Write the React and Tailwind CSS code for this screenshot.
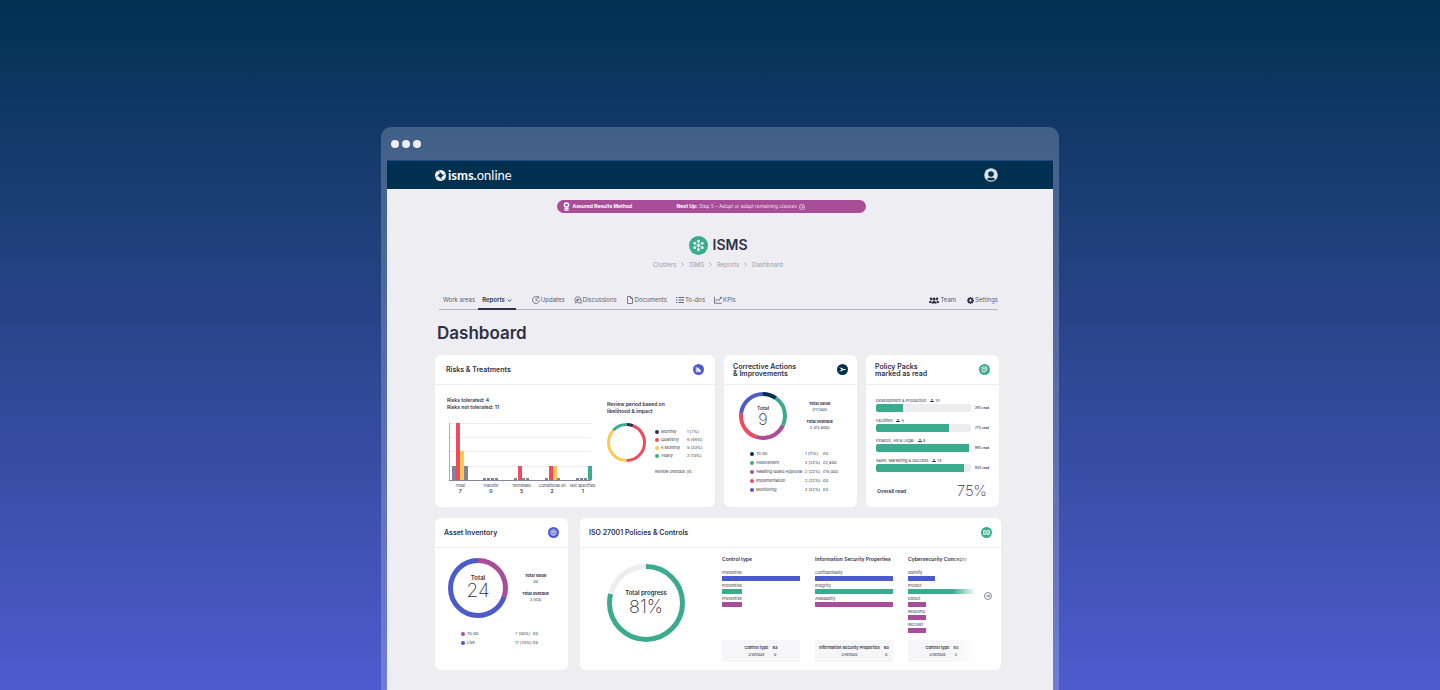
import { useState } from "react";
import clsx from "clsx";

const NAVY = "#00304f";
const INK = "#2f3147";
const RED = "#ee4b5e";
const YELLOW = "#ffc850";
const GREEN = "#3aab8e";
const PURPLE = "#a84d98";
const BLUE = "#4c5bcb";
const GREY = "#81839a";

const crumbs = ["Clusters", "ISMS", "Reports", "Dashboard"];

const riskGroups = [
  { label: "Treat", total: 7, x: 3, bars: [[14, GREY], [57, RED], [29, YELLOW], [14, GREY]] },
  { label: "Transfer", total: 0, x: 34, bars: [[2, GREY], [2, GREY], [2, GREY], [2, GREY]] },
  { label: "Terminate", total: 5, x: 65, bars: [[2, GREY], [14, RED], [2, GREY], [2, GREY]] },
  { label: "Conditional on", total: 2, x: 96, bars: [[2, GREY], [14, RED], [14, YELLOW], [2, GREY]] },
  { label: "Not specified", total: 1, x: 127, bars: [[2, GREY], [2, GREY], [2, GREY], [14, GREEN]] },
];

const reviewPeriods = [
  { label: "Monthly", value: "1 (7%)", dot: "bg-[#2f3147]" },
  { label: "Quarterly", value: "6 (46%)", dot: "bg-[#ee4b5e]" },
  { label: "6 Monthly", value: "5 (33%)", dot: "bg-[#ffc850]" },
  { label: "Yearly", value: "2 (13%)", dot: "bg-[#3aab8e]" },
];

const actions = [
  { label: "To-do", value: "1 (11%)", cost: "£0", dot: "bg-[#00304f]" },
  { label: "Assessment", value: "2 (22%)", cost: "£2,800", dot: "bg-[#3aab8e]" },
  { label: "Awaiting Board Approval", value: "2 (22%)", cost: "£15,000", dot: "bg-[#a84d98]" },
  { label: "Implementation", value: "2 (22%)", cost: "£0", dot: "bg-[#ee4b5e]" },
  { label: "Monitoring", value: "2 (22%)", cost: "£0", dot: "bg-[#4c5bcb]" },
];

const packs = [
  { label: "Development & Production", people: 14, read: 28 },
  { label: "Facilities", people: 6, read: 77 },
  { label: "Finance, HR & Legal", people: 9, read: 98 },
  { label: "Sales, Marketing & Success", people: 14, read: 93 },
];

const assets = [
  { label: "To-do", value: "7 (30%)", cost: "£0", dot: "bg-[#a84d98]" },
  { label: "Live", value: "17 (70%)", cost: "£0", dot: "bg-[#4c5bcb]" },
];

const controls = [
  {
    title: "Control type",
    footer: "Control type",
    bars: [
      { label: "Preventive", width: 100, color: "bg-[#4c5bcb]" },
      { label: "Preventive", width: 26, color: "bg-[#3aab8e]" },
      { label: "Preventive", width: 26, color: "bg-[#a84d98]" },
    ],
  },
  {
    title: "Information Security Properties",
    footer: "Information Security Properties",
    bars: [
      { label: "Confidentiality", width: 100, color: "bg-[#4c5bcb]" },
      { label: "Integrity", width: 100, color: "bg-[#3aab8e]" },
      { label: "Availability", width: 100, color: "bg-[#a84d98]" },
    ],
  },
  {
    title: "Cybersecurity Concepts",
    footer: "Control type",
    bars: [
      { label: "Identify", width: 39, color: "bg-[#4c5bcb]" },
      { label: "Protect", width: 100, color: "bg-[#3aab8e]" },
      { label: "Detect", width: 27, color: "bg-[#a84d98]" },
      { label: "Respond", width: 27, color: "bg-[#a84d98]" },
      { label: "Recover", width: 27, color: "bg-[#a84d98]" },
    ],
  },
];

/* ---------- Icons ---------- */

function LogoMark() {
  return (
    <svg viewBox="0 0 22 22" className="w-[11px] h-[11px]" aria-hidden="true">
      <circle cx="11" cy="11" r="11" fill="#fff" />
      <path d="M11 5.5 L14 8 L16.5 11 L14 14 L11 16.5 L8 14 L5.5 11 L8 8 Z" fill={NAVY} />
      <path d="M11 6 L6.5 1 M16 11 L21 6.5 M11 16 L15.5 21 M6 11 L1 15.5" stroke={NAVY} strokeWidth="1.3" />
    </svg>
  );
}

function UserIcon() {
  return (
    <svg viewBox="0 0 28 28" className="w-[14px] h-[14px]" aria-hidden="true">
      <circle cx="14" cy="14" r="13.5" fill="#dfe2ea" />
      <circle cx="14" cy="12" r="5.6" fill={NAVY} />
      <path d="M6 22.5 C8 19 11 18.8 14 20 C17 18.8 20 19 22 22.5 C17.5 26 10.5 26 6 22.5 Z" fill={NAVY} />
    </svg>
  );
}

function ClusterIcon() {
  const nodes = [[19, 10.5], [26.5, 14.7], [26.5, 23.3], [19, 27.5], [11.5, 23.3], [11.5, 14.7]];
  return (
    <svg viewBox="0 0 38 38" className="w-[19px] h-[19px]" aria-hidden="true">
      <circle cx="19" cy="19" r="19" fill={GREEN} />
      {nodes.map(([x, y]) => (
        <g key={`${x}-${y}`}>
          <path d={`M19 19 L${x} ${y}`} stroke="#fff" strokeWidth="0.8" />
          <circle cx={x} cy={y} r="2.8" fill="#fff" />
        </g>
      ))}
      <circle cx="19" cy="19" r="2.6" fill="#fff" />
    </svg>
  );
}

function RosetteIcon() {
  return (
    <svg viewBox="0 0 14 18" className="w-[7px] h-[9px]" aria-hidden="true">
      <circle cx="7" cy="6" r="4.2" fill="none" stroke="#fff" strokeWidth="3" />
      <path d="M3 12 H11 V17.5 H3 Z" fill="#fff" />
      <path d="M5 15 H9" stroke={PURPLE} strokeWidth="1.2" />
    </svg>
  );
}

function ArrowCircle({ className }) {
  return (
    <svg viewBox="0 0 16 16" className={className} fill="none" stroke="currentColor" strokeWidth="1.4" aria-hidden="true">
      <circle cx="8" cy="8" r="7" />
      <path d="M4 8 H11.5 M8.5 5 L11.5 8 L8.5 11" />
    </svg>
  );
}

function Chevron({ className }) {
  return (
    <svg viewBox="0 0 8 8" className={className} fill="none" stroke="currentColor" strokeWidth="1.3" aria-hidden="true">
      <path d="M2.5 1 L5.5 4 L2.5 7" />
    </svg>
  );
}

function NavIcon({ name }) {
  return (
    <svg viewBox="0 0 16 16" className="w-2 h-2" fill="none" stroke="currentColor" strokeWidth="1.6" aria-hidden="true">
      {name === "clock" && (
        <>
          <path d="M13 3 A7 7 0 1 0 15 8.5 M13.5 0.5 V4 H10" />
          <path d="M8 4 V8.5 L11 9.5" />
        </>
      )}
      {name === "chat" && (
        <>
          <path d="M14 6 A6.3 5.5 0 1 0 4 11.5 L2.5 14 L6 13" />
          <path d="M4.5 6.5 H10 M4.5 9 H7" />
          <ellipse cx="11" cy="10.5" rx="4" ry="3.5" />
          <path d="M13 13.5 L15 15" />
        </>
      )}
      {name === "file" && <path d="M3 1 H9.5 L13 4.5 V15 H3 Z M9 1 V5 H13" />}
      {name === "list" && (
        <path d="M5 3 H16 M5 8 H16 M5 13 H16 M0 3 H2.5 M0 8 H2.5 M0 13 H2.5" strokeWidth="1.9" />
      )}
      {name === "chart" && <path d="M1 1.5 V14.5 H15.5 M3.5 11 L7 6 L10 9 L14.5 2.5 M11.5 3 L14.5 2.5 V5.5" />}
    </svg>
  );
}

function TeamIcon() {
  return (
    <svg viewBox="0 0 20 14" className="w-[10px] h-[7px] text-[#2f3147]" fill="currentColor" aria-hidden="true">
      <circle cx="10" cy="4" r="3.2" />
      <circle cx="4" cy="3.5" r="2.6" />
      <circle cx="16" cy="3.5" r="2.6" />
      <path d="M4.5 13 C4.5 9.5 7 8 10 8 C13 8 15.5 9.5 15.5 13 Z" />
      <path d="M0 12 C0 8 1.5 6.8 5 7 L4 12 Z M20 12 C20 8 18.5 6.8 15 7 L16 12 Z" />
    </svg>
  );
}

function GearIcon() {
  return (
    <svg viewBox="0 0 16 16" className="w-[7px] h-[7px] text-[#2f3147]" fill="none" stroke="currentColor" aria-hidden="true">
      <circle cx="8" cy="8" r="4.4" strokeWidth="3.6" />
      <path d="M8 0 V3 M8 13 V16 M0 8 H3 M13 8 H16 M2.3 2.3 L4.4 4.4 M11.6 11.6 L13.7 13.7 M2.3 13.7 L4.4 11.6 M11.6 4.4 L13.7 2.3" strokeWidth="3" />
    </svg>
  );
}

function Badge({ color, children }) {
  return (
    <svg viewBox="0 0 22 22" className="w-[11px] h-[11px] shrink-0" fill="none" stroke="#fff" strokeWidth="1.5" aria-hidden="true">
      <circle cx="11" cy="11" r="11" fill={color} stroke="none" />
      {children}
    </svg>
  );
}

function PeopleGlyph() {
  return (
    <svg viewBox="0 0 10 8" className="w-1 h-[3px]" fill="currentColor" aria-hidden="true">
      <circle cx="5" cy="2" r="2" />
      <path d="M0 8 V5 H2.5 L5 4.5 L7.5 5 H10 V8 Z" />
    </svg>
  );
}

/* ---------- Shared pieces ---------- */

function Card({ title, icon, tight, children }) {
  return (
    <section className="bg-white rounded-md flex flex-col min-w-0">
      <header
        className={clsx(
          "h-[30px] flex items-center justify-between border-b border-[#ededf2]",
          tight ? "px-[9px]" : "px-[11px]"
        )}
      >
        <h2 className="text-[7px] leading-[7px] font-semibold whitespace-pre-line">{title}</h2>
        {icon}
      </header>
      {children}
    </section>
  );
}

// segments: [[percent, color], ...] clockwise from the top
function Donut({ segments, stroke, size, className, children }) {
  const r = (size - stroke) / 2;
  let start = 0;
  return (
    <div className={clsx("grid place-items-center shrink-0", className)}>
      <svg viewBox={`0 0 ${size} ${size}`} className="col-start-1 row-start-1 w-full h-full -rotate-90" aria-hidden="true">
        {segments.map(([percent, color], i) => {
          const offset = -start;
          start += percent;
          return (
            <circle
              key={i}
              cx={size / 2}
              cy={size / 2}
              r={r}
              fill="none"
              stroke={color}
              strokeWidth={stroke}
              pathLength="100"
              strokeDasharray={`${percent} ${100 - percent}`}
              strokeDashoffset={offset}
            />
          );
        })}
      </svg>
      <div className="col-start-1 row-start-1 text-center">{children}</div>
    </div>
  );
}

function Totals({ value, overdue }) {
  return (
    <dl className="text-center text-[4px] leading-[6px] whitespace-nowrap">
      <dt className="font-bold">Total value</dt>
      <dd>{value}</dd>
      <dt className="font-bold mt-[6px]">Total overdue</dt>
      <dd>{overdue}</dd>
    </dl>
  );
}

function Legend({ rows, rowClass, labelClass }) {
  return (
    <table className="text-[4px] whitespace-nowrap text-left">
      <tbody>
        {rows.map((row) => (
          <tr key={row.label} className={rowClass}>
            <th scope="row" className={clsx("p-0 font-normal", labelClass)}>
              <span className="flex items-center gap-[2px]">
                <span className={clsx("w-1 h-1 rounded-full", row.dot)} />
                {row.label}
              </span>
            </th>
            <td className="p-0 w-[18px]">{row.value}</td>
            {row.cost && <td className="p-0">{row.cost}</td>}
          </tr>
        ))}
      </tbody>
    </table>
  );
}

/* ---------- Page sections ---------- */

function TabBar() {
  const [open, setOpen] = useState(false);
  const links = [
    { label: "Updates", icon: "clock" },
    { label: "Discussions", icon: "chat" },
    { label: "Documents", icon: "file" },
    { label: "To-dos", icon: "list" },
    { label: "KPIs", icon: "chart" },
  ];

  return (
    <nav className="mt-[25px] ml-1 mr-[3px] h-4 flex items-stretch border-b border-[#b3b2c6] text-[6px] leading-[12px] text-[#5a5c70] whitespace-nowrap">
      <a href="#work-areas" className="pl-1 pr-[3px]">Work areas</a>
      <button
        type="button"
        aria-expanded={open}
        onClick={() => setOpen(!open)}
        className="h-4 px-1 flex gap-[2px] border-b-2 border-[#2f3147] font-semibold text-[#2f3147]"
      >
        Reports
        <Chevron className={clsx("w-[5px] h-[5px] mt-1", open ? "-rotate-90" : "rotate-90")} />
      </button>
      <div className="flex gap-[9px] ml-4 h-3">
        {links.map((link) => (
          <a key={link.label} href={`#${link.label}`} className="flex items-center gap-px">
            <NavIcon name={link.icon} />
            {link.label}
          </a>
        ))}
      </div>
      <div className="flex gap-[11px] ml-auto h-3">
        <a href="#team" className="flex items-center gap-px"><TeamIcon />Team</a>
        <a href="#settings" className="flex items-center gap-px"><GearIcon />Settings</a>
      </div>
    </nav>
  );
}

function RisksCard() {
  return (
    <Card
      title="Risks & Treatments"
      icon={
        <Badge color={BLUE}>
          <path d="M6.5 6 V15.5 H16" />
          <path d="M8.5 13.5 V8 H11 V11 H13.5 L15 13.5 Z" fill="#fff" />
        </Badge>
      }
    >
      <div className="flex">
        <div className="pt-[11px] pl-[10px] w-[163px]">
          <p className="pl-[2px] text-[5px] leading-[8px] font-semibold">Risks tolerated: 4</p>
          <p className="pl-[2px] text-[5px] leading-[7px] font-semibold">Risks not tolerated: 11</p>
          <svg viewBox="0 0 144 58" className="mt-3 ml-1 w-36 h-[58px]" shapeRendering="crispEdges" aria-hidden="true">
            {[0, 14, 28, 43].map((y) => (
              <rect key={y} x="0" y={y} width="142" height="1" fill="#ebebf0" />
            ))}
            <rect x="0" y="0" width="1" height="58" fill="#a9aaba" />
            {riskGroups.map((group) =>
              group.bars.map(([height, color], i) => (
                <rect
                  key={`${group.label}-${i}`}
                  x={group.x + i * 4}
                  y={57 - height}
                  width={height === 2 ? 3 : 4}
                  height={height}
                  fill={color}
                />
              ))
            )}
            <rect x="0" y="57" width="142" height="1" fill="#85869b" />
          </svg>
          <ul className="grid grid-cols-5 mt-[2px] text-center whitespace-nowrap">
            {riskGroups.map((group) => (
              <li key={group.label} className="flex flex-col items-center">
                <span className="text-[4px] leading-[5px]">{group.label}</span>
                <strong className="text-[5px] leading-[6px] font-semibold">{group.total}</strong>
              </li>
            ))}
          </ul>
        </div>
        <div className="pt-4 pl-[9px]">
          <h3 className="text-[5px] leading-[7px] font-semibold">Review period based on<br />likelihood &amp; impact</h3>
          <div className="flex gap-[9px] mt-2">
            <Donut size={39} stroke={3} className="w-[39px] h-[39px]" segments={[[6, INK], [44, RED], [37, YELLOW], [13, GREEN]]} />
            <div className="pt-[5px]">
              <Legend rows={reviewPeriods} rowClass="h-2" labelClass="w-8" />
              <p className="mt-[9px] text-[4px] leading-[6px]">Review overdue (4)</p>
            </div>
          </div>
        </div>
      </div>
    </Card>
  );
}

function ActionsCard() {
  return (
    <Card
      tight
      title={"Corrective Actions\n& Improvements"}
      icon={
        <Badge color={NAVY}>
          <path d="M6 7 L10 11 L6 15 M8 8 L13 11 L8 14 M10 11 H17" strokeWidth="2" />
        </Badge>
      }
    >
      <div className="flex items-center justify-between pl-[15px] pr-6 pt-[7px]">
        <Donut
          size={48}
          stroke={4}
          className="w-12 h-12"
          segments={[[10, NAVY], [22, GREEN], [23, PURPLE], [22, RED], [23, BLUE]]}
        >
          <p className="text-[5px] leading-[6px] font-semibold">Total</p>
          <p className="text-[16px] leading-[16px] font-extralight">9</p>
        </Donut>
        <Totals value="£17,800" overdue="2 (£2,800)" />
      </div>
      <div className="pl-[26px] pt-[9px]">
        <Legend rows={actions} rowClass="h-[9px]" labelClass="w-[55px]" />
      </div>
    </Card>
  );
}

function PolicyPacksCard() {
  return (
    <Card
      tight
      title={"Policy Packs\nmarked as read"}
      icon={
        <Badge color={GREEN}>
          <path d="M6 6 H15.5 V12 L12 16 H6.5 Z" />
          <path d="M8 9 H13 M9 12 L11 14 L16 9" />
        </Badge>
      }
    >
      <ul className="pt-3 pl-[10px] pr-3">
        {packs.map((pack) => (
          <li key={pack.label} className="h-5 whitespace-nowrap">
            <p className="flex items-center gap-px h-[7px] text-[4px] leading-[6px]">
              <span className="mr-[3px]">{pack.label}</span>
              <PeopleGlyph />
              {pack.people}
            </p>
            <div className="flex items-center gap-1">
              <div className="flex-1 h-2 rounded-[2px] bg-[#ececf1] overflow-hidden">
                <div className="h-full bg-[#3aab8e]" style={{ width: `${pack.read}%` }} />
              </div>
              <span className="w-3 text-[3px] leading-[4px] font-semibold">{pack.read}% read</span>
            </div>
          </li>
        ))}
      </ul>
      <div className="flex items-center justify-between pl-[11px] pr-3 pt-[6px]">
        <span className="text-[5px] leading-[7px] font-semibold">Overall read</span>
        <span className="text-[15px] leading-4 font-extralight">75%</span>
      </div>
    </Card>
  );
}

function AssetsCard() {
  return (
    <Card
      tight
      title="Asset Inventory"
      icon={
        <Badge color={BLUE}>
          <path d="M11 5 L16 8 V14 L11 17 L6 14 V8 Z M8.5 9 H13.5 M8.5 11.5 H13.5 M9 14 H13" />
        </Badge>
      }
    >
      <div className="flex items-center justify-between pl-[13px] pr-[19px] pt-[10px]">
        <Donut size={60} stroke={5} className="w-[60px] h-[60px]" segments={[[30, PURPLE], [70, BLUE]]}>
          <p className="text-[6px] leading-[6px] font-semibold">Total</p>
          <p className="text-[19px] leading-5 font-extralight">24</p>
        </Donut>
        <Totals value="£0" overdue="3 (£0)" />
      </div>
      <div className="pl-[26px] pt-[11px]">
        <Legend rows={assets} rowClass="h-[9px]" labelClass="w-[54px]" />
      </div>
    </Card>
  );
}

function ControlsCard() {
  return (
    <Card
      tight
      title="ISO 27001 Policies & Controls"
      icon={
        <Badge color={GREEN}>
          <path d="M5 7 H10 V15 H5 Z M12 7 H17 V15 H12 Z M6.5 10 H9 M13.5 10 H16 M6.5 12.5 H9 M13.5 12.5 H16" />
        </Badge>
      }
    >
      <div className="flex pl-[27px] pr-[9px] h-[122px]">
        <Donut size={78} stroke={5} className="w-[78px] h-[78px] mt-4" segments={[[79, GREEN], [21, "#ececf1"]]}>
          <p className="text-[6px] leading-[8px] font-semibold">Total progress</p>
          <p className="text-[18px] leading-5 font-extralight">81%</p>
        </Donut>
        <div className="relative flex-1 ml-[37px] grid grid-cols-[78fr_78fr_68fr] gap-[15px] pt-2">
          {controls.map((group) => (
            <div key={group.title} className="min-w-0 flex flex-col whitespace-nowrap">
              <h3 className="text-[5px] leading-[7px] font-semibold mb-[7px]">{group.title}</h3>
              {group.bars.map((bar, i) => (
                <div key={i} className="mb-[2px]">
                  <p className="text-[4px] leading-[6px]">{bar.label}</p>
                  <div className={clsx("h-[5px]", bar.color)} style={{ width: `${bar.width}%` }} />
                </div>
              ))}
              <dl className="mt-auto mb-2 h-[22px] grid grid-cols-[auto_auto] justify-center content-center justify-items-center gap-x-1 bg-[#f6f6f9] text-[4px] leading-[7px]">
                <dt className="font-semibold">{group.footer}</dt>
                <dd className="font-semibold">93</dd>
                <dt>Overdue</dt>
                <dd>0</dd>
              </dl>
            </div>
          ))}
          <div className="absolute inset-y-0 right-0 w-6 bg-linear-to-r from-white/0 to-white" />
        </div>
        <button type="button" aria-label="Next controls" className="ml-2 w-2 self-start mt-11 text-[#55576c]">
          <ArrowCircle className="w-2 h-2" />
        </button>
      </div>
    </Card>
  );
}

export default function App() {
  return (
    <div className="h-screen min-h-[640px] overflow-hidden pt-[127px] px-6 flex justify-center bg-linear-to-b from-[#003152] to-[#4f5bcf] font-['Inter',sans-serif] text-[#2f3147]">
      <div className="w-full max-w-[678px] rounded-t-[10px] px-[6px] bg-white/20 flex flex-col">
        {/* Window controls */}
        <div className="h-[33px] pl-1 flex items-center gap-[3px] shrink-0">
          <span className="w-2 h-2 rounded-full bg-[#efeef3]" />
          <span className="w-2 h-2 rounded-full bg-[#efeef3]" />
          <span className="w-2 h-2 rounded-full bg-[#efeef3]" />
        </div>

        <header className="h-[29px] shrink-0 pl-12 pr-[55px] flex items-center justify-between bg-[#00304f] border-t border-[#234a85]">
          <a href="#home" className="flex items-center gap-[2px] text-white font-['Lato',sans-serif] text-[13px] leading-4">
            <LogoMark />
            <span><b className="font-bold">isms.</b>online</span>
          </a>
          <button type="button" aria-label="Account"><UserIcon /></button>
        </header>

        <main className="flex-1 bg-[#eeedf2] pt-[11px] pl-12 pr-[52px]">
          <div className="flex justify-center pr-[14px]">
            <a
              href="#next-step"
              className="w-[309px] h-[13px] rounded-full bg-[#a84d98] text-white text-[5px] leading-[7px] flex items-center pl-[6px] whitespace-nowrap"
            >
              <RosetteIcon />
              <b className="ml-[3px] w-[104px] font-bold">Assured Results Method</b>
              <span><b className="font-bold">Next Up:</b> <span className="font-light">Step 5 – Adopt or adapt remaining clauses</span></span>
              <ArrowCircle className="w-[6px] h-[6px] ml-[2px]" />
            </a>
          </div>

          <div className="mt-[22px] h-5 flex items-center justify-center gap-[5px]">
            <ClusterIcon />
            <span className="text-[14px] leading-5 font-semibold">ISMS</span>
          </div>
          <nav aria-label="Breadcrumb" className="mt-[5px] flex justify-center items-center gap-1 text-[6px] leading-[9px] text-[#9b9cab]">
            {crumbs.map((crumb, i) => (
              <span key={crumb} className="flex items-center gap-1">
                {i > 0 && <Chevron className="w-[5px] h-[5px]" />}
                <a href={`#${crumb}`}>{crumb}</a>
              </span>
            ))}
          </nav>

          <TabBar />

          <h1 className="mt-3 pl-[2px] text-[17px] leading-[22px] font-semibold">Dashboard</h1>

          <div className="mt-[11px] mr-[2px] grid grid-cols-[280fr_133fr_133fr] gap-[9px] min-h-[152px]">
            <RisksCard />
            <ActionsCard />
            <PolicyPacksCard />
          </div>
          <div className="mt-[11px] grid grid-cols-[133fr_421fr] gap-3 min-h-[152px]">
            <AssetsCard />
            <ControlsCard />
          </div>
        </main>
      </div>
    </div>
  );
}
